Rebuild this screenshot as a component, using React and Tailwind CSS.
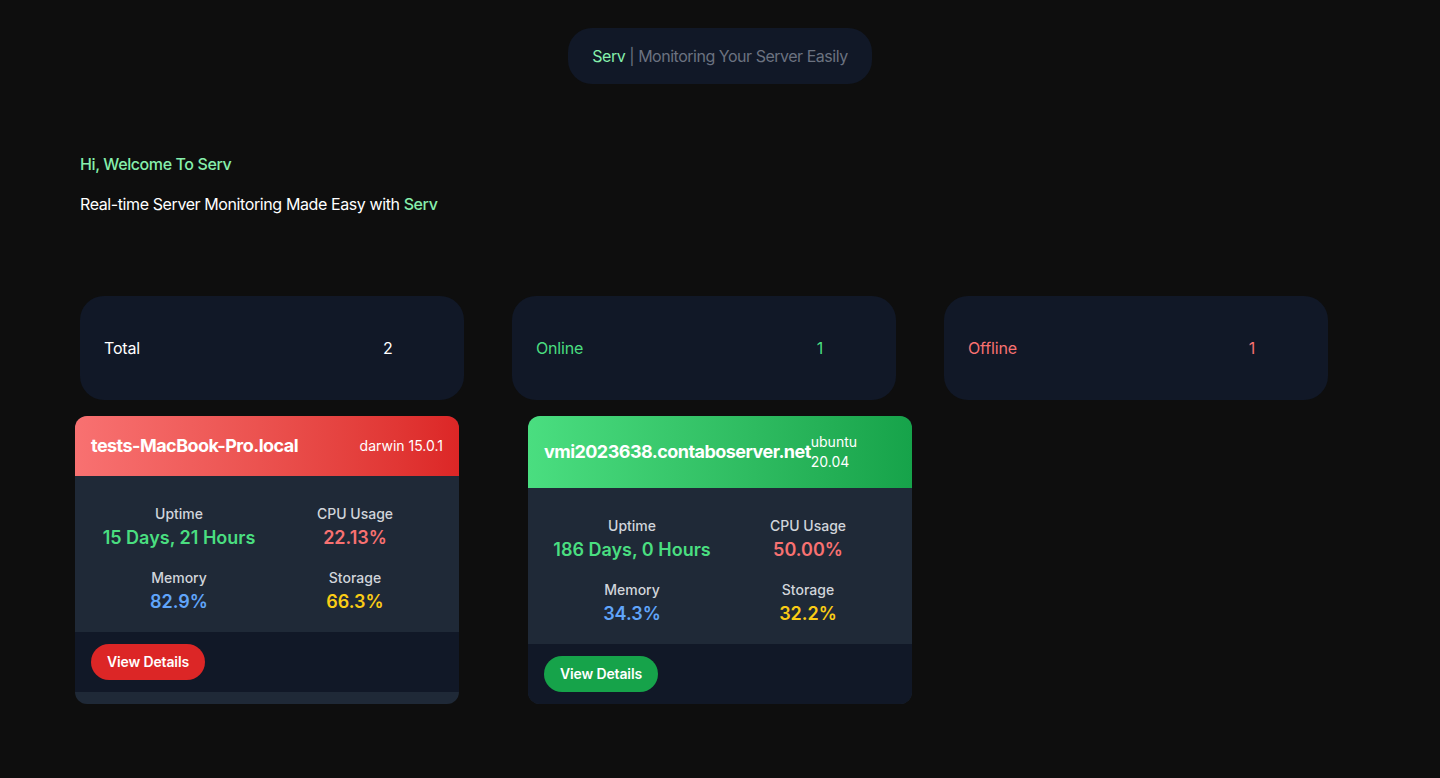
import React from "react";

const servers = [
  {
    name: "tests-MacBook-Pro.local",
    os: "darwin 15.0.1",
    online: false,
    uptime: "15 Days, 21 Hours",
    cpu: "22.13%",
    memory: "82.9%",
    storage: "66.3%",
  },
  {
    name: "vmi2023638.contaboserver.net",
    os: "ubuntu 20.04",
    online: true,
    uptime: "186 Days, 0 Hours",
    cpu: "50.00%",
    memory: "34.3%",
    storage: "32.2%",
  },
];

function StatCard({ label, value, color }) {
  return (
    <div className="w-[384px] h-[104px] rounded-3xl bg-[#111827] flex items-center pl-6 pr-6">
      <div className={`flex-1 text-base tracking-[-0.01em] ${color}`}>{label}</div>
      <div className={`w-[104px] text-center text-base ${color}`}>{value}</div>
    </div>
  );
}

function ServerCard({ s }) {
  return (
    <div className="w-[384px] h-[288px] rounded-xl bg-[#1f2937] overflow-hidden flex flex-col">
      <div
        className={`flex items-start justify-between p-4 ${
          s.online
            ? "bg-gradient-to-r from-[#4ade80] to-[#16a34a]"
            : "bg-gradient-to-r from-[#f87171] to-[#dc2626]"
        }`}
      >
        <div className="text-lg leading-7 font-bold tracking-[-0.03em] text-white whitespace-nowrap self-center">{s.name}</div>
        <div className={`text-sm leading-5 text-white ${s.online ? "" : "self-center"}`}>{s.os}</div>
      </div>
      <div className="grid grid-cols-2 gap-y-4 px-4 pt-7 pb-4 text-center">
        <div>
          <div className="text-sm leading-5 font-medium text-[#d1d5db]">Uptime</div>
          <div className="text-lg leading-7 font-semibold text-[#4ade80]">{s.uptime}</div>
        </div>
        <div>
          <div className="text-sm leading-5 font-medium text-[#d1d5db]">CPU Usage</div>
          <div className="text-lg leading-7 font-semibold text-[#f87171]">{s.cpu}</div>
        </div>
        <div>
          <div className="text-sm leading-5 font-medium text-[#d1d5db]">Memory</div>
          <div className="text-lg leading-7 font-semibold text-[#60a5fa]">{s.memory}</div>
        </div>
        <div>
          <div className="text-sm leading-5 font-medium text-[#d1d5db]">Storage</div>
          <div className="text-lg leading-7 font-semibold text-[#facc15]">{s.storage}</div>
        </div>
      </div>
      <div className="bg-[#111827] p-3 px-4 flex">
        <button
          className={`rounded-full px-4 py-2 text-sm leading-5 font-semibold tracking-[-0.01em] text-white ${
            s.online ? "bg-[#16a34a]" : "bg-[#dc2626]"
          }`}
        >
          View Details
        </button>
      </div>
    </div>
  );
}

export default function App() {
  return (
    <div
      className="min-h-[778px] w-full bg-[#0e0e0e] text-white"
      style={{ fontFamily: "Inter, 'Noto Sans', sans-serif" }}
    >
      <div className="flex justify-center pt-7">
        <div className="rounded-3xl bg-[#111827] px-6 py-4 text-base leading-6 tracking-[-0.03em]">
          <span className="text-[#86efac]">Serv</span>
          <span className="text-[#6b7280]"> | Monitoring Your Server Easily</span>
        </div>
      </div>

      <div className="px-20 pt-[68px] tracking-[-0.025em]">
        <div className="text-base leading-6 font-medium text-[#86efac]">Hi, Welcome To Serv</div>
        <div className="mt-4 text-base leading-6 text-white">
          Real-time Server Monitoring Made Easy with <span className="font-medium text-[#86efac]">Serv</span>
        </div>
      </div>

      <div className="flex gap-12 px-20 pt-20">
        <StatCard label="Total" value="2" color="text-white" />
        <StatCard label="Online" value="1" color="text-[#4ade80]" />
        <StatCard label="Offline" value="1" color="text-[#f87171]" />
      </div>

      <div className="flex gap-[69px] pl-[75px] pt-4">
        {servers.map((s) => (
          <ServerCard key={s.name} s={s} />
        ))}
      </div>
    </div>
  );
}
